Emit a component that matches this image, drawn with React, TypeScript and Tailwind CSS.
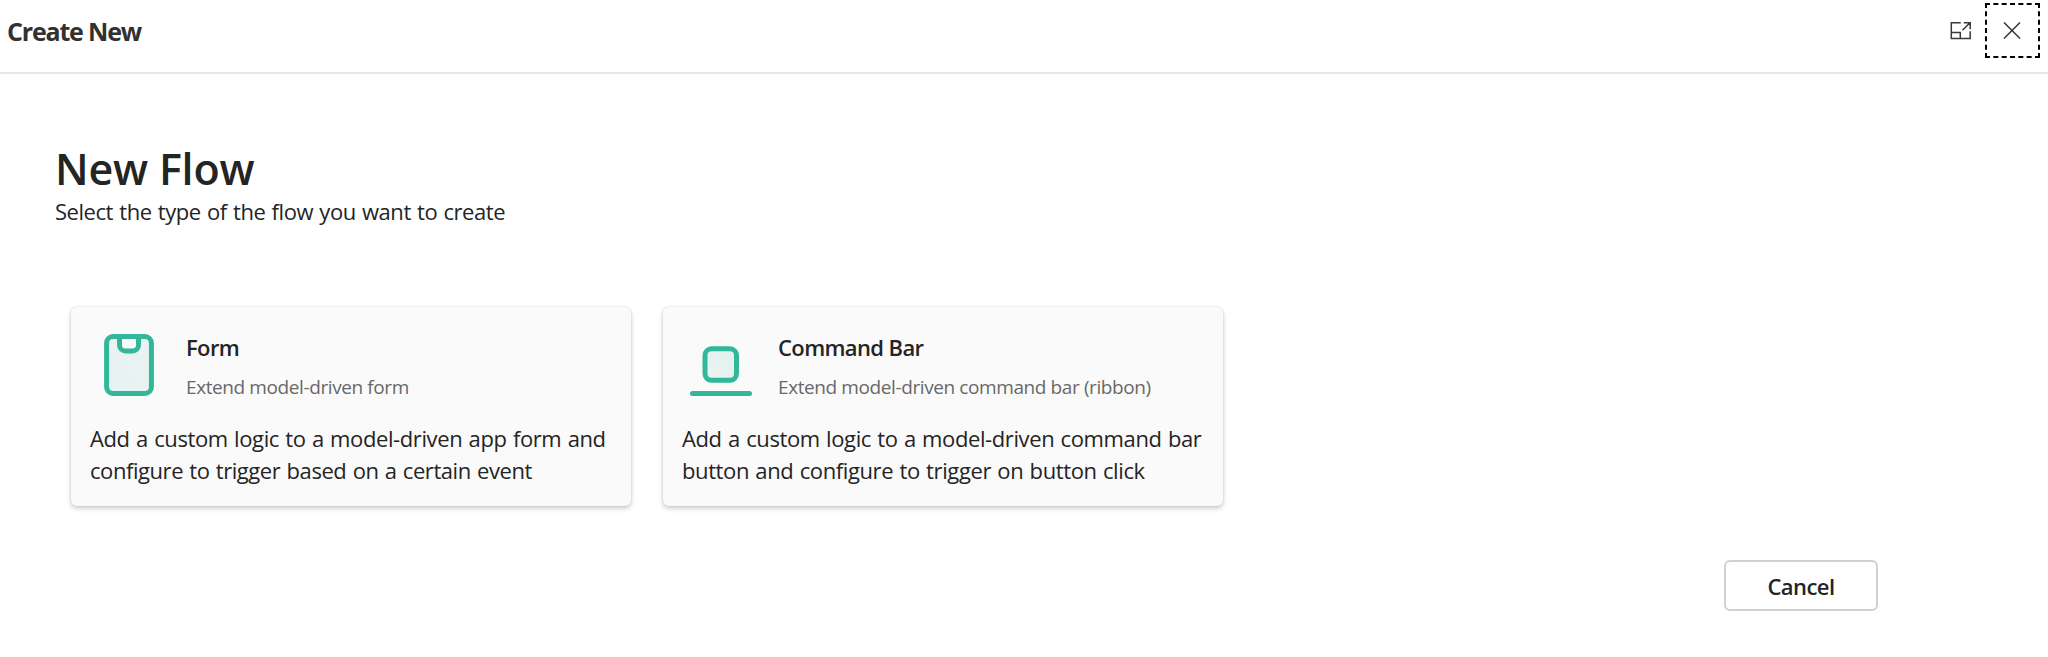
import type { ReactNode } from "react";

function FormIcon() {
  return (
    <svg width="64" height="64" viewBox="0 0 64 64" fill="none" stroke="#32b79a" strokeWidth="5">
      <defs>
        <linearGradient id="formFill" x1="0" y1="1" x2="1" y2="0">
          <stop offset="0" stopColor="#e6f3f1" />
          <stop offset="1" stopColor="#ebf2f1" />
        </linearGradient>
      </defs>
      <rect x="9.6" y="3.5" width="44.8" height="57" rx="6.5" fill="url(#formFill)" />
      <path d="M22.5 3.5v8.5a6 6 0 0 0 6 6h7a6 6 0 0 0 6-6V3.5z" fill="#fafafa" />
    </svg>
  );
}

function CommandBarIcon() {
  return (
    <svg width="64" height="64" viewBox="0 0 64 64" fill="none" stroke="#32b79a" strokeWidth="5" strokeLinecap="round">
      <defs>
        <linearGradient id="barFill" x1="0" y1="1" x2="1" y2="0">
          <stop offset="0" stopColor="#e9f5f1" />
          <stop offset="1" stopColor="#e4f0ee" />
        </linearGradient>
      </defs>
      <rect x="16" y="15.8" width="31.5" height="31.5" rx="6.5" fill="url(#barFill)" />
      <path d="M3.5 60.5h57" />
    </svg>
  );
}

type CardProps = { icon: ReactNode; title: ReactNode; subtitle: ReactNode; children: ReactNode };

function Card({ icon, title, subtitle, children }: CardProps) {
  return (
    <div className="h-[199px] w-[560px] rounded-[6px] bg-[#fafafa] pt-[25px] pl-[19px] shadow-[0_0_3px_rgba(0,0,0,0.14),0_3px_5px_rgba(0,0,0,0.16)]">
      <div className="flex h-[66px]">
        <div className="mt-[1px] ml-[7px] h-[64px] w-[64px]">{icon}</div>
        <div className="ml-[25px]">
          <div className="-mt-[1px] text-[22px] leading-[32px] font-semibold tracking-[-0.62px]">{title}</div>
          <div className="mt-[9px] text-[19px] leading-[30px] tracking-[-0.4px] text-[#686868]">{subtitle}</div>
        </div>
      </div>
      <div className="mt-[24px] text-[22px] leading-[32px] tracking-[-0.39px] [word-spacing:1px]">{children}</div>
    </div>
  );
}

export default function App() {
  return (
    <div className="h-[657px] w-[2048px] overflow-hidden bg-white font-['Open_Sans','Noto_Sans',sans-serif] whitespace-nowrap text-[#242424]">
      <header className="flex h-[74px] items-start border-b-2 border-[#e6e6e6] pr-[8px] pl-[7px]">
        <h1 className="mt-[15px] text-[25px] leading-[32px] font-bold text-[#323130]">
          <span className="tracking-[-1.18px]">Create New</span>
        </h1>
        <button className="mt-[20px] ml-auto h-[21px] w-[22px]" aria-label="Expand">
          <svg width="22" height="21" viewBox="0 0 22 21" fill="none" stroke="#3b3a39" strokeWidth="1.5">
            <path d="M10.8 2.8H1.3v15.7h18.9v-7.2M1.3 12.6h9v5.9M12.4 10.2l7.6-7.4M13.8 2.8h6.4v6.4" />
          </svg>
        </button>
        <button className="mt-[3px] ml-[13px] flex h-[55px] w-[55px] items-center justify-center" aria-label="Close">
          <svg width="55" height="55" viewBox="0 0 55 55" fill="none" stroke="#3b3a39" strokeWidth="1.6">
            <path
              d="M0 1H55M0 54H55M1 0V55M54 0V55"
              stroke="#000"
              strokeWidth="2"
              strokeDasharray="5 3.333"
            />
            <path d="M19 19.5l16 16M35 19.5l-16 16" />
          </svg>
        </button>
      </header>
      <main className="pl-[55px]">
        <h2 className="pt-[67px] text-[43px] leading-[56px] font-semibold tracking-[-0.2px]">New Flow</h2>
        <p className="-mt-[2px] text-[22px] leading-[32px] tracking-[-0.45px] [word-spacing:1px]">
          Select the type of the flow you want to create
        </p>
        <div className="mt-[80px] flex gap-[32px] pl-[16px]">
          <Card icon={<FormIcon />} title="Form" subtitle="Extend model-driven form">
            <div>Add a custom logic to a model-driven app form and</div>
            <div className="tracking-[-0.44px]">configure to trigger based on a certain event</div>
          </Card>
          <Card icon={<CommandBarIcon />} title="Command Bar" subtitle="Extend model-driven command bar (ribbon)">
            <div>Add a custom logic to a model-driven command bar</div>
            <div>button and configure to trigger on button click</div>
          </Card>
        </div>
        <div className="mt-[54px] flex justify-end pr-[170px]">
          <button className="h-[51px] w-[154px] rounded-[6px] border-2 border-[#d1d1d1] text-[22px] leading-[32px] font-semibold tracking-[-0.55px]">
            Cancel
          </button>
        </div>
      </main>
    </div>
  );
}
